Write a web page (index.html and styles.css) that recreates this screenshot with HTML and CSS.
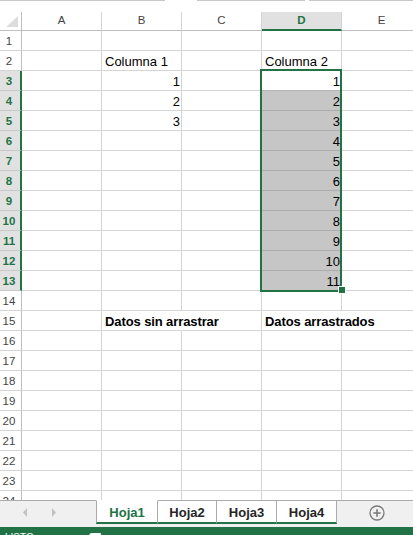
FILE: index.html
```html
<!DOCTYPE html>
<html lang="es">
<head>
<meta charset="utf-8">
<title>Hoja1</title>
<link rel="stylesheet" href="styles.css">
</head>
<body>
<div class="app">
  <div class="sheetwrap">
    <div class="topstrip">
      <span class="seg s1"></span><span class="gap g1"></span><span class="seg s2"></span><span class="gap g2"></span><span class="seg s3"></span>
    </div>
    <div class="grid">
      <div class="hd corner"><svg width="12" height="11" viewBox="0 0 12 11"><polygon points="12,0 12,11 0,11" fill="#dcdcdc"/></svg></div>
      <div class="hd">A</div><div class="hd">B</div><div class="hd">C</div><div class="hd on">D</div><div class="hd">E</div>

      <div class="rh">1</div><div class="c"></div><div class="c"></div><div class="c"></div><div class="c"></div><div class="c"></div>
      <div class="rh">2</div><div class="c"></div><div class="c">Columna 1</div><div class="c"></div><div class="c">Columna 2</div><div class="c"></div>
      <div class="rh on">3</div><div class="c"></div><div class="c n">1</div><div class="c"></div><div class="c n act">1<div class="selbox"><div class="handle"></div></div></div><div class="c"></div>
      <div class="rh on">4</div><div class="c"></div><div class="c n">2</div><div class="c"></div><div class="c n sel">2</div><div class="c"></div>
      <div class="rh on">5</div><div class="c"></div><div class="c n">3</div><div class="c"></div><div class="c n sel">3</div><div class="c"></div>
      <div class="rh on">6</div><div class="c"></div><div class="c"></div><div class="c"></div><div class="c n sel">4</div><div class="c"></div>
      <div class="rh on">7</div><div class="c"></div><div class="c"></div><div class="c"></div><div class="c n sel">5</div><div class="c"></div>
      <div class="rh on">8</div><div class="c"></div><div class="c"></div><div class="c"></div><div class="c n sel">6</div><div class="c"></div>
      <div class="rh on">9</div><div class="c"></div><div class="c"></div><div class="c"></div><div class="c n sel">7</div><div class="c"></div>
      <div class="rh on">10</div><div class="c"></div><div class="c"></div><div class="c"></div><div class="c n sel">8</div><div class="c"></div>
      <div class="rh on">11</div><div class="c"></div><div class="c"></div><div class="c"></div><div class="c n sel">9</div><div class="c"></div>
      <div class="rh on">12</div><div class="c"></div><div class="c"></div><div class="c"></div><div class="c n sel">10</div><div class="c"></div>
      <div class="rh on">13</div><div class="c"></div><div class="c"></div><div class="c"></div><div class="c n sel">11</div><div class="c"></div>
      <div class="rh">14</div><div class="c"></div><div class="c"></div><div class="c"></div><div class="c"></div><div class="c"></div>
      <div class="rh">15</div><div class="c"></div><div class="c b ov">Datos sin arrastrar</div><div class="c"></div><div class="c b ov">Datos arrastrados</div><div class="c"></div>
      <div class="rh">16</div><div class="c"></div><div class="c"></div><div class="c"></div><div class="c"></div><div class="c"></div>
      <div class="rh">17</div><div class="c"></div><div class="c"></div><div class="c"></div><div class="c"></div><div class="c"></div>
      <div class="rh">18</div><div class="c"></div><div class="c"></div><div class="c"></div><div class="c"></div><div class="c"></div>
      <div class="rh">19</div><div class="c"></div><div class="c"></div><div class="c"></div><div class="c"></div><div class="c"></div>
      <div class="rh">20</div><div class="c"></div><div class="c"></div><div class="c"></div><div class="c"></div><div class="c"></div>
      <div class="rh">21</div><div class="c"></div><div class="c"></div><div class="c"></div><div class="c"></div><div class="c"></div>
      <div class="rh">22</div><div class="c"></div><div class="c"></div><div class="c"></div><div class="c"></div><div class="c"></div>
      <div class="rh">23</div><div class="c"></div><div class="c"></div><div class="c"></div><div class="c"></div><div class="c"></div>
      <div class="rh">24</div><div class="c"></div><div class="c"></div><div class="c"></div><div class="c"></div><div class="c"></div>
    </div>
  </div>
  <div class="tabbar">
    <div class="nav">
      <svg class="arr l" width="4" height="9" viewBox="0 0 4 9"><polygon points="4,0 4,9 0,4.5" fill="#c2c2c2"/></svg>
      <svg class="arr r" width="4" height="9" viewBox="0 0 4 9"><polygon points="0,0 0,9 4,4.5" fill="#c2c2c2"/></svg>
    </div>
    <div class="tab active t1">Hoja1</div>
    <div class="tab t2">Hoja2</div>
    <div class="tab t3">Hoja3</div>
    <div class="tab t4">Hoja4</div>
    <div class="add">
      <svg width="16" height="16" viewBox="0 0 16 16"><circle cx="8" cy="8" r="7" fill="none" stroke="#7a7a7a" stroke-width="1.3"/><path d="M8 4.3v7.4M4.3 8h7.4" stroke="#7a7a7a" stroke-width="1.6"/></svg>
    </div>
  </div>
  <div class="status"><span class="ready">LISTO</span><span class="sicon"></span></div>
</div>
</body>
</html>
```
FILE: styles.css
```css
html, body {
  margin: 0;
  padding: 0;
  overflow: hidden;
  background: #fff;
}
body {
  width: 413px;
  height: 535px;
  font-family: "Liberation Sans", Arial, sans-serif;
}
.app {
  display: flex;
  flex-direction: column;
  height: 535px;
  width: 413px;
  overflow: hidden;
}
.sheetwrap {
  flex: none;
  height: 500px;
  overflow: hidden;
}
.topstrip {
  height: 12px;
  display: flex;
  align-items: flex-start;
}
.topstrip .seg {
  height: 1px;
  background: #c8c8c8;
}
.topstrip .s1 { width: 165px; }
.topstrip .g1 { width: 32px; }
.topstrip .s2 { width: 108px; }
.topstrip .g2 { width: 4px; }
.topstrip .s3 { flex: 1; }

.grid {
  display: grid;
  grid-template-columns: 22px repeat(5, 80px);
  grid-template-rows: 19px;
  grid-auto-rows: 20px;
  width: 422px;
}
.hd {
  box-sizing: border-box;
  border-right: 1px solid #d4d4d4;
  border-bottom: 1px solid #bfbfbf;
  display: flex;
  align-items: center;
  justify-content: center;
  font-size: 11.5px;
  line-height: 15px;
  color: #444;
  padding-bottom: 1px;
}
.hd.corner {
  border-right-color: #bfbfbf;
  align-items: flex-end;
  justify-content: flex-end;
  padding: 0 3px 3px 0;
}
.hd.corner svg { display: block; }
.hd.on {
  background: #e1e1e1;
  border-bottom: 2px solid #217346;
  color: #217346;
  font-weight: bold;
  padding-bottom: 0;
}
.rh {
  box-sizing: border-box;
  border-right: 1px solid #bfbfbf;
  border-bottom: 1px solid #d4d4d4;
  display: flex;
  align-items: flex-end;
  justify-content: center;
  padding: 0 3px 1px 0;
  font-size: 11.5px;
  line-height: 15px;
  color: #444;
}
.rh.on {
  background: #e1e1e1;
  color: #217346;
  font-weight: bold;
  border-right: 2px solid #217346;
  border-bottom-color: #c8c8c8;
  padding-right: 2px;
}
.c {
  box-sizing: border-box;
  border-right: 1px solid #d4d4d4;
  border-bottom: 1px solid #d4d4d4;
  display: flex;
  align-items: flex-end;
  padding: 0 1px 1px 3px;
  font-size: 13px;
  line-height: 15px;
  color: #000;
  white-space: nowrap;
  min-width: 0;
}
.c.n { justify-content: flex-end; }
.c.b { font-weight: bold; letter-spacing: -0.1px; }
.c.ov {
  border-right-color: transparent;
  overflow: visible;
}
.c.sel {
  background: #c6c6c6;
  border-bottom-color: #ababab;
}
.c.act {
  position: relative;
  border-bottom-color: #b4b4b4;
}
.selbox {
  position: absolute;
  left: -2px;
  top: -2px;
  width: 82px;
  height: 223px;
  box-sizing: border-box;
  border: 2px solid #217346;
}
.handle {
  position: absolute;
  right: -6px;
  bottom: -4px;
  width: 8px;
  height: 8px;
  box-sizing: border-box;
  background: #217346;
  border: 1px solid #fff;
}

.tabbar {
  flex: none;
  height: 27px;
  display: flex;
  align-items: flex-start;
  background: #f0f0f0;
}
.nav {
  box-sizing: border-box;
  width: 96px;
  height: 27px;
  border-top: 1px solid #ababab;
  display: flex;
  align-items: flex-start;
  padding-top: 7px;
}
.arr { display: block; }
.arr.l { margin-left: 23px; }
.arr.r { margin-left: 25px; }
.tab {
  box-sizing: border-box;
  height: 24px;
  border-top: 1px solid #ababab;
  border-right: 1px solid #ababab;
  border-bottom: 2px solid #217346;
  background: #fff;
  font-weight: bold;
  font-size: 13px;
  line-height: 15px;
  text-align: center;
  padding-top: 4px;
  color: #262626;
}
.tab.active {
  border-top-color: #fff;
  border-left: 1px solid #ababab;
  color: #217346;
}
.t1 { width: 62px; }
.t2 { width: 59px; }
.t3 { width: 60px; }
.t4 { width: 60px; }
.add {
  flex: 1;
  box-sizing: border-box;
  height: 27px;
  border-top: 1px solid #ababab;
  padding: 4px 0 0 32px;
}
.add svg { display: block; }
.status {
  flex: none;
  height: 8px;
  background: #217346;
  overflow: hidden;
  display: flex;
  align-items: flex-start;
  padding: 5px 0 0 5px;
  box-sizing: border-box;
  color: #fff;
  font-size: 10px;
  line-height: 12px;
}
.sicon {
  display: block;
  width: 12px;
  height: 8px;
  margin: 1px 0 0 55px;
  background: #fff;
  border-radius: 3px 1px 0 0;
}
```
